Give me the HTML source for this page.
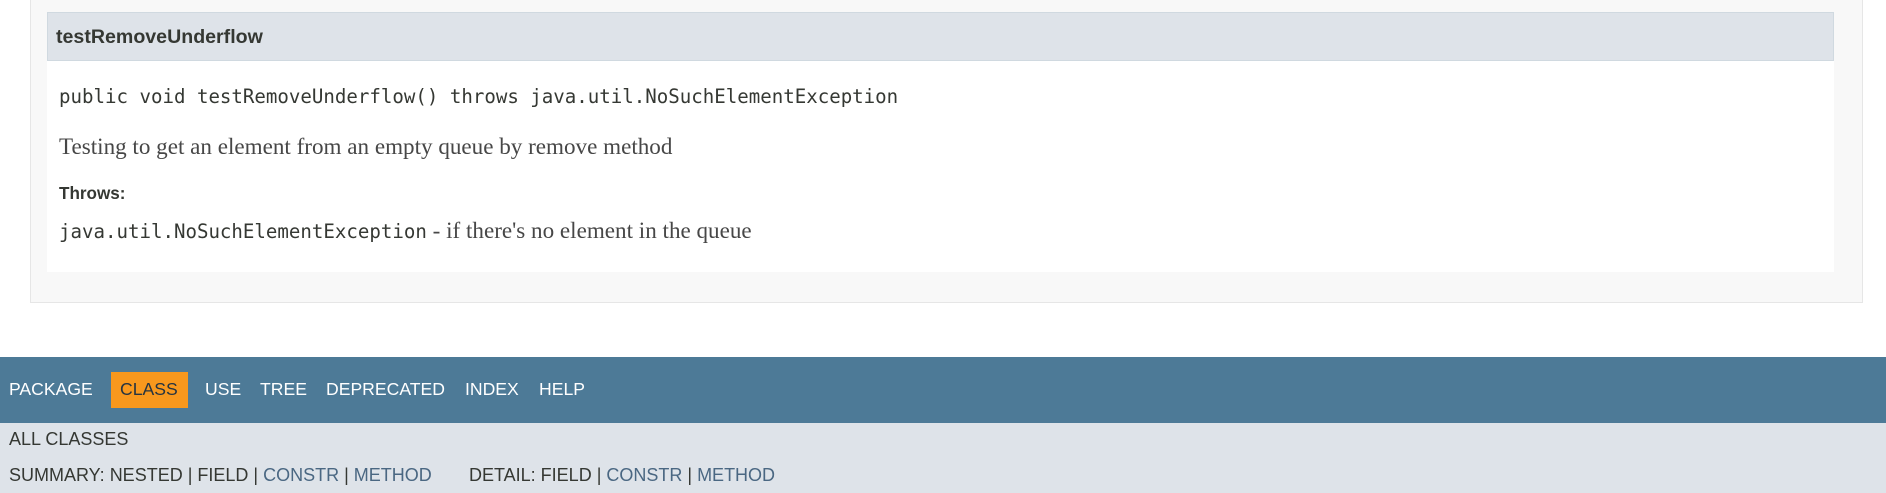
<!DOCTYPE html>
<html><head><meta charset="utf-8"><style>
body{margin:0;width:1886px;height:493px;background:#fff;position:relative;overflow:hidden;font-family:"Liberation Sans",Arial,sans-serif}
.outer{position:absolute;left:30px;top:-2px;width:1833px;height:305px;background:#f8f8f8;border:1px solid #e6e6e6;box-sizing:border-box}
.hdr{position:absolute;left:47px;top:12px;width:1787px;height:49px;background:#dee3e9;border:1px solid #d0d9e0;box-sizing:border-box}
.hdr span{position:absolute;left:8px;top:13px;font-weight:bold;font-size:19.6px;color:#353833}
.body{position:absolute;left:47px;top:61px;width:1787px;height:211px;background:#fff}
.t{position:absolute;left:59px;white-space:nowrap;color:#353833}
.mono{font-family:"DejaVu Sans Mono","Liberation Mono",monospace;font-size:19.1px}
.serif{font-family:"Liberation Serif",serif;font-size:23.1px;color:#474747}
.nav{position:absolute;left:0;top:357px;width:1886px;height:66px;background:#4d7a97}
.nav span{position:absolute;top:22px;color:#fff;font-size:17.6px}
.cls{position:absolute;left:111px;top:15px;width:77px;height:36px;background:#f8981d}
.sub{position:absolute;left:0;top:423px;width:1886px;height:70px;background:#dee3e9}
.sub div{position:absolute;left:9px;font-size:18px;color:#353833;white-space:pre}
.l{color:#4a6782}
</style></head><body>
<div class="outer"></div>
<div class="hdr"><span>testRemoveUnderflow</span></div>
<div class="body"></div>
<div class="t mono" style="top:85px">public void testRemoveUnderflow() throws java.util.NoSuchElementException</div>
<div class="t serif" style="top:133px">Testing to get an element from an empty queue by remove method</div>
<div class="t" style="top:184px;font-weight:bold;font-size:17.1px">Throws:</div>
<div class="t" style="top:217px"><span class="mono">java.util.NoSuchElementException</span><span class="serif"> - if there's no element in the queue</span></div>
<div class="nav"><div class="cls"></div>
<span style="left:9px">PACKAGE</span><span style="left:120px;color:#253441">CLASS</span><span style="left:205px">USE</span><span style="left:260px">TREE</span><span style="left:326px">DEPRECATED</span><span style="left:465px">INDEX</span><span style="left:539px">HELP</span></div>
<div class="sub"><div style="top:6px" class="l">ALL CLASSES</div>
<div style="top:42px">SUMMARY: NESTED | FIELD | <span class="l">CONSTR</span> | <span class="l">METHOD</span></div>
<div style="top:42px;left:469px">DETAIL: FIELD | <span class="l">CONSTR</span> | <span class="l">METHOD</span></div></div>
</body></html>
